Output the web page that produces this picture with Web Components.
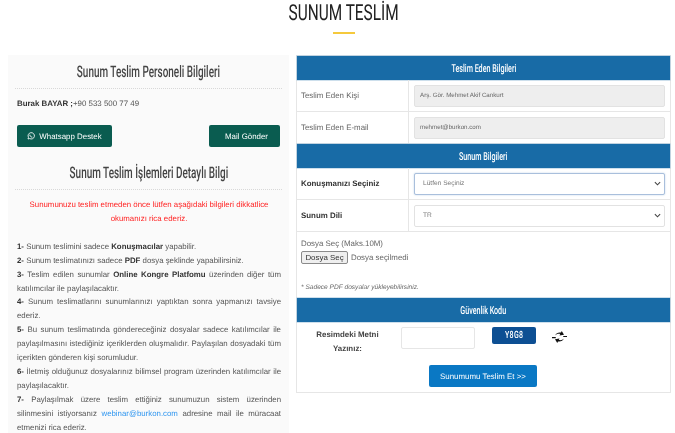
<!DOCTYPE html>
<html lang="tr">
<head>
<meta charset="utf-8">
<title>Sunum Teslim</title>
<style>
  html, body { margin: 0; background: #fff; overflow: hidden; }
  body { height: 433px; font-family: "Liberation Sans", Arial, sans-serif; font-size: 7.9px; color: #555; text-rendering: geometricPrecision; filter: blur(.3px); }
  rule-list a { color: #2f96f0; }
  rule-list b { color: #333; }
</style>
</head>
<body>
<page-title>SUNUM TESLİM</page-title>
<page-columns>
  <info-panel slot="left">
    <panel-heading>Sunum Teslim Personeli Bilgileri</panel-heading>
    <contact-block></contact-block>
    <panel-heading>Sunum Teslim İşlemleri Detaylı Bilgi</panel-heading>
    <rule-list>
      <p class="warn">Sunumunuzu teslim etmeden önce lütfen aşağıdaki bilgileri dikkatlice<br>okumanızı rica ederiz.</p>
      <p><b>1-</b> Sunum teslimini sadece <b>Konuşmacılar</b> yapabilir.</p>
      <p><b>2-</b> Sunum teslimatınızı sadece <b>PDF</b> dosya şeklinde yapabilirsiniz.</p>
      <p><b>3-</b> Teslim edilen sunumlar <b>Online Kongre Platfomu</b> üzerinden diğer tüm katılımcılar ile paylaşılacaktır.</p>
      <p><b>4-</b> Sunum teslimatlarını sunumlarınızı yaptıktan sonra yapmanızı tavsiye ederiz.</p>
      <p><b>5-</b> Bu sunum teslimatında göndereceğiniz dosyalar sadece katılımcılar ile paylaşılmasını istediğiniz içeriklerden oluşmalıdır. Paylaşılan dosyadaki tüm içerikten gönderen kişi sorumludur.</p>
      <p><b>6-</b> İletmiş olduğunuz dosyalarınız bilimsel program üzerinden katılımcılar ile paylaşılacaktır.</p>
      <p><b>7-</b> Paylaşılmak üzere teslim ettiğiniz sunumuzun sistem üzerinden silinmesini istiyorsanız <a>webinar@burkon.com</a> adresine mail ile müracaat etmenizi rica ederiz.</p>
    </rule-list>
  </info-panel>
  <submit-form slot="right"></submit-form>
</page-columns>

<script>
// narrow heading font: nothing like Oswald is installed, so squeeze a sans
const narrow = `font-family: "Roboto", "Liberation Sans", sans-serif; display: inline-block; white-space: nowrap;`;

class PageTitle extends HTMLElement {
  constructor() {
    super();
    this.attachShadow({ mode: "open" });
    this.shadowRoot.innerHTML = /* html */`
    <style>
      :host { display: flex; flex-direction: column; align-items: center; height: 55px; box-sizing: border-box; padding: 2px 0 0 12px; }
      .text { ${narrow} font-size: 22px; line-height: 24px; color: #222; transform: scaleX(.7); }
      .bar { width: 22px; height: 2px; background: #f5c93c; margin-top: 6px; }
    </style>
    <div class="text"><slot></slot></div>
    <div class="bar"></div>`;
  }
}

class PageColumns extends HTMLElement {
  constructor() {
    super();
    this.attachShadow({ mode: "open" });
    this.shadowRoot.innerHTML = /* html */`
    <style>
      :host { display: grid; grid-template-columns: 281px 375px; column-gap: 7px; padding-left: 8px; align-items: start; }
    </style>
    <slot name="left"></slot>
    <slot name="right"></slot>`;
  }
}

class InfoPanel extends HTMLElement {
  constructor() {
    super();
    this.attachShadow({ mode: "open" });
    this.shadowRoot.innerHTML = /* html */`
    <style>
      :host { display: block; background: #fafafa; padding: 0 7px; height: 378px; overflow: hidden; }
    </style>
    <slot></slot>`;
  }
}

class PanelHeading extends HTMLElement {
  constructor() {
    super();
    this.attachShadow({ mode: "open" });
    this.shadowRoot.innerHTML = /* html */`
    <style>
      :host { display: flex; justify-content: center; height: 33px; align-items: center; border-bottom: 1px dotted #d8d8d8; }
      .text { ${narrow} font-size: 16px; font-weight: 500; color: #444; transform: scaleX(.62); }
    </style>
    <div class="text"><slot></slot></div>`;
  }
}

class ContactBlock extends HTMLElement {
  constructor() {
    super();
    this.attachShadow({ mode: "open" });
    this.shadowRoot.innerHTML = /* html */`
    <style>
      :host { display: block; padding: 9px 2px 0; height: 67px; box-sizing: border-box; }
      .phone { line-height: 12px; color: #555; }
      .phone b { color: #333; }
      .actions { display: flex; justify-content: space-between; margin-top: 15px; }
      .btn { display: flex; align-items: center; justify-content: center; gap: 4px; height: 22px; background: #0a5c50; color: #fff; border-radius: 2px; box-sizing: border-box; }
      .wa { width: 95px; }
      .mail { width: 71px; padding-left: 4px; }
      svg { width: 8px; height: 8px; }
    </style>
    <div class="phone"><b>Burak BAYAR ;</b>+90 533 500 77 49</div>
    <div class="actions">
      <div class="btn wa">
        <svg viewBox="0 0 24 24" fill="none" stroke="#fff" stroke-width="2.6"><path d="M3 21l1.400-5A9.500 9.500 0 1 1 8 19.700z"/><path d="M8.500 8c0 4 3.500 7.500 7.500 7.500" stroke-width="3"/></svg>
        <span>Whatsapp Destek</span>
      </div>
      <div class="btn mail"><span>Mail Gönder</span></div>
    </div>`;
  }
}

class RuleList extends HTMLElement {
  constructor() {
    super();
    this.attachShadow({ mode: "open" });
    this.shadowRoot.innerHTML = /* html */`
    <style>
      :host { display: block; padding: 8px 1px 0 2px; font-size: 7.85px; line-height: 13.9px; text-align: justify; color: #555; }
      ::slotted(p) { margin: 0; }
      ::slotted(p.warn) { color: #f22; text-align: center; margin-bottom: 14px; }
    </style>
    <slot></slot>`;
  }
}

class FormBand extends HTMLElement {
  constructor() {
    super();
    this.attachShadow({ mode: "open" });
    this.shadowRoot.innerHTML = /* html */`
    <style>
      :host { display: flex; align-items: center; justify-content: center; height: 24px; background: #186ba6; box-shadow: 0 0 0 .5px #9cc0da; }
      .text { ${narrow} font-size: 11px; font-weight: 500; color: #fff; transform: scaleX(.65); }
    </style>
    <div class="text"><slot></slot></div>`;
  }
}

class FormRow extends HTMLElement {
  constructor() {
    super();
    this.attachShadow({ mode: "open" });
    this.shadowRoot.innerHTML = /* html */`
    <style>
      :host { display: grid; grid-template-columns: 112px 1fr; height: 32px; border-bottom: 1px solid #e6e6e6; box-sizing: border-box; }
      .label { display: flex; align-items: center; padding-left: 4px; border-right: 1px solid #e6e6e6; color: #666; }
      :host([strong]) .label { font-weight: bold; color: #333; }
      .field { display: flex; align-items: center; padding: 0 5px; }
    </style>
    <div class="label"><slot name="label"></slot></div>
    <div class="field"><slot></slot></div>`;
  }
}

class TextBox extends HTMLElement {
  constructor() {
    super();
    this.attachShadow({ mode: "open" });
    const select = this.hasAttribute("select");
    this.shadowRoot.innerHTML = /* html */`
    <style>
      :host { display: flex; align-items: center; flex: 1; height: 22px; box-sizing: border-box; padding-left: 5px; font-size: 6.200px; color: #666; background: #eee; border: 1px solid #e2e2e2; border-radius: 2px; }
      :host([select]) { background: #fff; padding-left: 8px; justify-content: space-between; padding-right: 3px; color: #777; font-size: 6.600px; }
      :host([focus]) { border-color: #a9bfdc; box-shadow: 0 0 2px #bdd0e6; }
      svg { width: 7px; height: 7px; }
    </style>
    <span><slot></slot></span>
    ${select ? `<svg viewBox="0 0 16 16" fill="none" stroke="#444" stroke-width="2.500"><path d="M2 5l6 6 6-6"/></svg>` : ""}`;
  }
}

class SubmitForm extends HTMLElement {
  constructor() {
    super();
    this.attachShadow({ mode: "open" });
    this.shadowRoot.innerHTML = /* html */`
    <style>
      :host { display: block; box-sizing: border-box; border: 1px solid #e6e6e6; height: 338px; }
      .upload { height: 66px; box-sizing: border-box; padding: 6px 4px 0; color: #666; line-height: 12px; }
      .pick { display: flex; align-items: center; gap: 3px; margin-top: 1px; }
      .pick button { font: 7.900px "Liberation Sans", sans-serif; height: 13px; width: 47px; padding: 0; color: #333; background: #efefef; border: 1px solid #8a8a8a; border-radius: 2px; }
      .note { margin-top: 18px; font-size: 6.600px; font-style: italic; color: #666; }
      .captcha { display: grid; grid-template-columns: 104px 91px 60px auto; justify-content: start; padding-top: 5px; }
      .ask { font-weight: bold; color: #444; text-align: center; line-height: 14px; padding: 1px 3px 0 0; }
      .box { width: 74px; height: 22px; box-sizing: border-box; border: 1px solid #e6e6e6; border-radius: 2px; }
      .code { display: flex; align-items: center; justify-content: center; width: 44px; height: 17px; background: #0d4f93; border-radius: 2px; color: #fff; font: 500 10px Roboto, sans-serif; }
      .code span { transform: scaleX(.7); letter-spacing: .5px; }
      .captcha svg { width: 15px; height: 12px; margin-top: 4px; }
      .send { display: flex; justify-content: center; margin: 9px 1px 0 0; }
      .send div { display: flex; align-items: center; justify-content: center; width: 108px; height: 22px; background: #0a78c4; border-radius: 2px; color: #fff; }
    </style>
    <form-band>Teslim Eden Bilgileri</form-band>
    <form-row><span slot="label">Teslim Eden Kişi</span><text-box>Arş. Gör. Mehmet Akif Cankurt</text-box></form-row>
    <form-row><span slot="label">Teslim Eden E-mail</span><text-box>mehmet@burkon.com</text-box></form-row>
    <form-band>Sunum Bilgileri</form-band>
    <form-row strong><span slot="label">Konuşmanızı Seçiniz</span><text-box select focus>Lütfen Seçiniz</text-box></form-row>
    <form-row strong><span slot="label">Sunum Dili</span><text-box select>TR</text-box></form-row>
    <div class="upload">
      <div>Dosya Seç (Maks.10M)</div>
      <div class="pick"><button type="button">Dosya Seç</button><span>Dosya seçilmedi</span></div>
      <div class="note">* Sadece PDF dosyalar yükleyebilirsiniz.</div>
    </div>
    <form-band>Güvenlik Kodu</form-band>
    <div class="captcha">
      <div class="ask">Resimdeki Metni<br>Yazınız:</div>
      <div class="box"></div>
      <div class="code"><span>Y8G8</span></div>
      <svg viewBox="0 0 20 16" fill="#111"><path d="M4 6c1.500-3 4-4.500 8-4l1-2 3 5-6 1 1-2c-3-.5-5 0-7 2z"/><path d="M16 10c-1.500 3-4 4.500-8 4l-1 2-3-5 6-1-1 2c3 .5 5 0 7-2z"/><path d="M0 8h5v1.500H0zM15 6.500h5V8h-5z"/></svg>
    </div>
    <div class="send"><div>Sunumumu Teslim Et &gt;&gt;</div></div>`;
  }
}

customElements.define("page-title", PageTitle);
customElements.define("page-columns", PageColumns);
customElements.define("info-panel", InfoPanel);
customElements.define("panel-heading", PanelHeading);
customElements.define("contact-block", ContactBlock);
customElements.define("rule-list", RuleList);
customElements.define("form-band", FormBand);
customElements.define("form-row", FormRow);
customElements.define("text-box", TextBox);
customElements.define("submit-form", SubmitForm);
</script>
</body>
</html>
